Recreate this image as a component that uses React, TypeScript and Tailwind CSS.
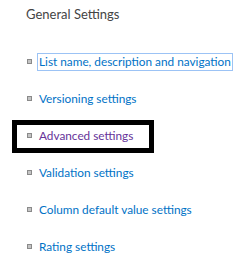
const links = [
  { label: 'List name, description and navigation', focused: true },
  { label: 'Versioning settings' },
  { label: 'Advanced settings', visited: true, marked: true },
  { label: 'Validation settings' },
  { label: 'Column default value settings' },
  { label: 'Rating settings' },
];

export default function App() {
  return (
    <div className="w-[240px] h-[274px] bg-white overflow-hidden font-['Lato',sans-serif]">
      <h2 className="pl-[26px] pt-[5px] text-[13px] leading-[18px] text-[#444444] font-normal">
        General Settings
      </h2>
      <ul className="mt-[20px]">
        {links.map((l) => (
          <li key={l.label} className="relative h-[37px] flex items-center pl-[27px]">
            <span className="w-[5px] h-[5px] bg-[#c4c4c4] border border-[#8a8a8a] shrink-0" />
            <a
              className={`ml-[5px] px-[1px] border text-[11.8px] leading-[16px] whitespace-nowrap ${
                l.focused ? 'border-[#9cc3f5]' : 'border-transparent'
              } ${l.visited ? 'text-[#663399]' : 'text-[#0072c6]'}`}
            >
              {l.label}
            </a>
            {l.marked && (
              <span className="absolute left-[12px] top-[3px] w-[142px] h-[33px] border-[5px] border-black" />
            )}
          </li>
        ))}
      </ul>
    </div>
  );
}
